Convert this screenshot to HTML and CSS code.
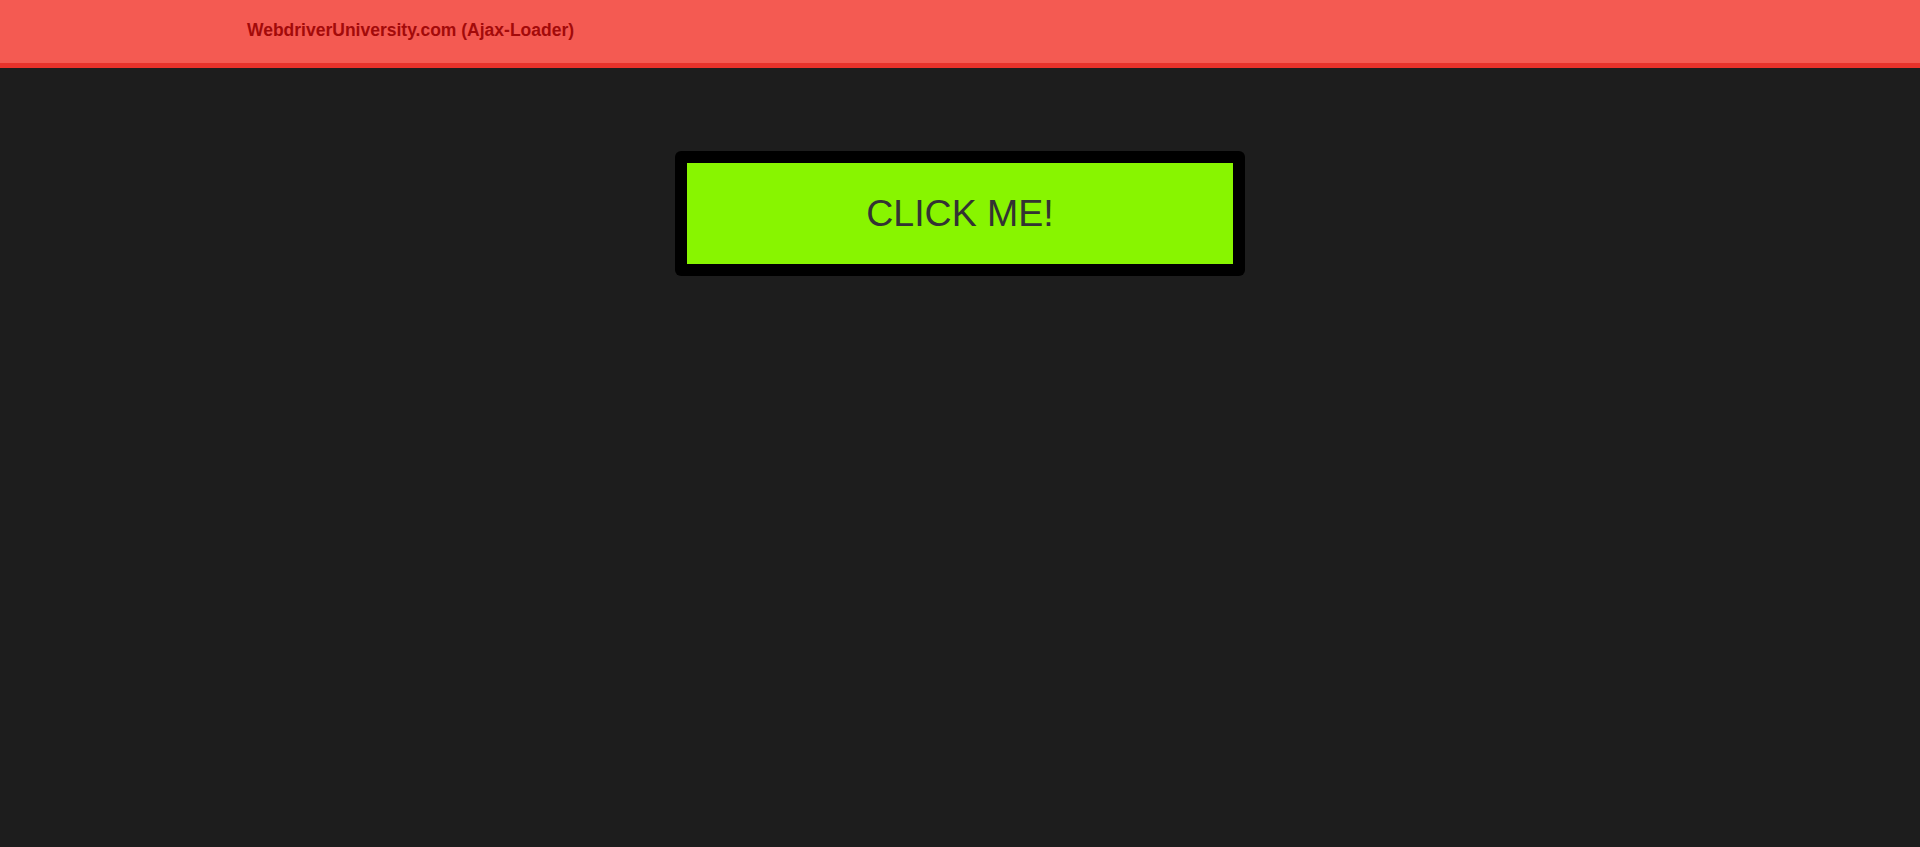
FILE: index.html
```html
<!DOCTYPE html>
<html>
<head>
<meta charset="utf-8">
<link rel="stylesheet" href="styles.css">
</head>
<body>
<header class="topbar">
  <div class="brand">WebdriverUniversity.com (Ajax-Loader)</div>
</header>
<main class="main">
  <div class="frame">
    <div class="button">CLICK ME!</div>
  </div>
</main>
</body>
</html>
```
FILE: styles.css
```css
html, body {
  margin: 0;
  padding: 0;
  background: #1d1d1d;
  font-family: "Liberation Sans", Arial, sans-serif;
}
.topbar {
  height: 63px;
  background: #f45a52;
  border-bottom: 5px solid #e8322b;
  display: flex;
  align-items: center;
  padding-left: 247px;
  box-sizing: content-box;
}
.brand {
  color: #a30a0a;
  font-weight: bold;
  font-size: 17.5px;
  padding-bottom: 2px;
}
.main {
  display: flex;
  justify-content: center;
  padding-top: 83px;
}
.frame {
  width: 546px;
  padding: 12px;
  background: #000;
  border-radius: 6px;
}
.button {
  height: 101px;
  background: #88f500;
  color: #333;
  font-size: 37.5px;
  display: flex;
  align-items: center;
  justify-content: center;
}
```
